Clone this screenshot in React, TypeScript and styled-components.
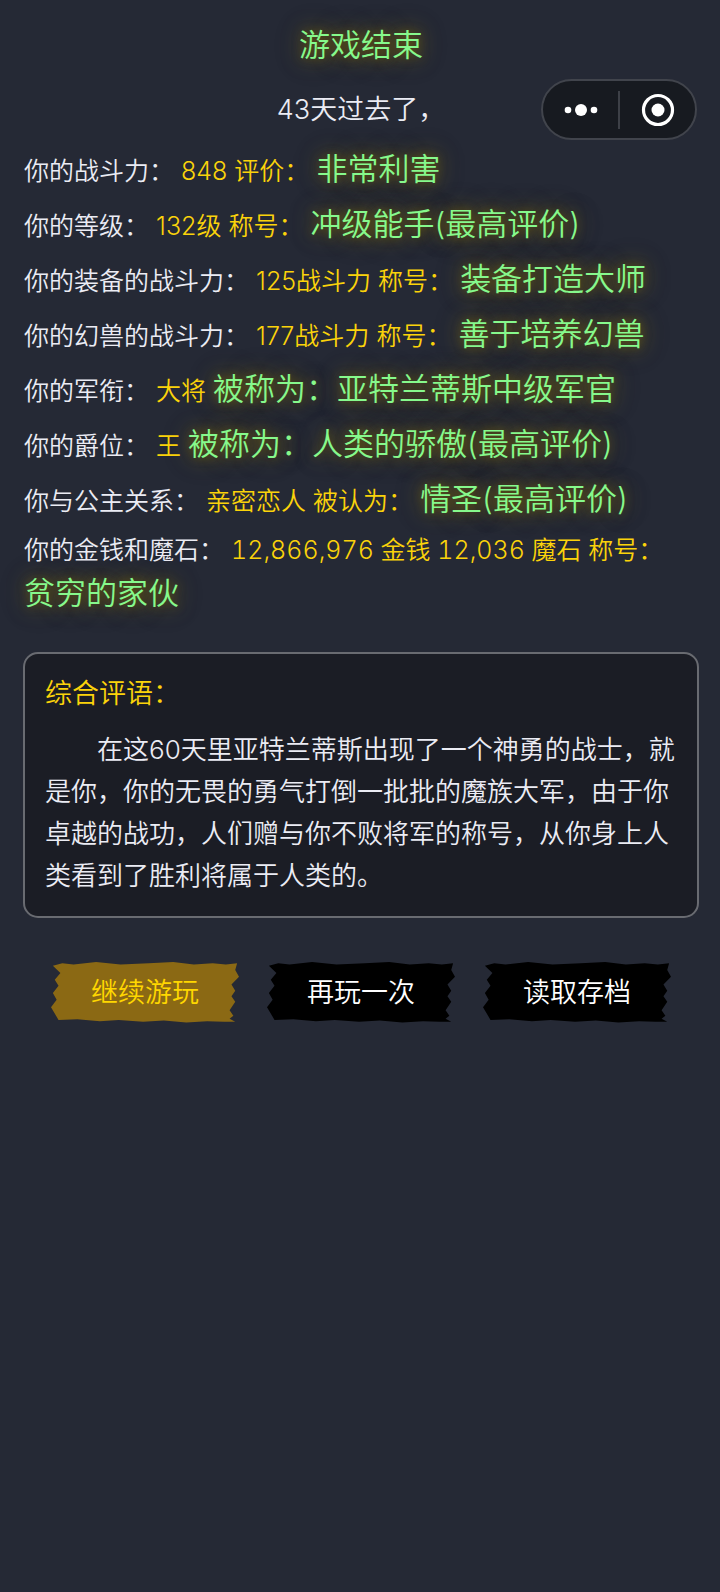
import React from "react";
import styled, { createGlobalStyle, css } from "styled-components";

const GlobalStyle = createGlobalStyle`
  * {
    box-sizing: border-box;
  }
  body {
    margin: 0;
    background: #252935;
    color: #ebecf4;
    font-family: Inter, "Noto Sans CJK SC", sans-serif;
    font-weight: 350;
  }
  button {
    font: inherit;
    border: 0;
    cursor: pointer;
  }
`;

const glow = css`
  color: #86f98c;
  text-shadow: 0 0 10px rgba(140, 115, 0, 0.5), 0 0 20px rgba(140, 115, 0, 0.6),
    0 0 30px rgba(140, 115, 0, 0.4);
`;

const Page = styled.main`
  position: relative;
  min-height: 100vh;
  padding: 22px 21px 40px 23px;
`;

const Title = styled.h1`
  margin: 0;
  font-size: 31px;
  font-weight: inherit;
  line-height: 46px;
  text-align: center;
  ${glow}
`;

const Elapsed = styled.p`
  margin: 22px 0 16px;
  font-size: 27px;
  line-height: 40px;
  text-align: center;
`;

const Capsule = styled.div`
  position: absolute;
  top: 79px;
  right: 23px;
  display: flex;
  align-items: center;
  width: 156px;
  height: 61px;
  border: 2px solid #41444c;
  border-radius: 31px;
  background: #171a20;
`;

const CapsuleButton = styled.button`
  display: flex;
  flex: 1;
  align-items: center;
  justify-content: center;
  height: 100%;
  padding: 0;
  background: transparent;
`;

const CapsuleDivider = styled.span`
  width: 2px;
  height: 38px;
  background: #3d4047;
`;

const Stats = styled.ul`
  display: flex;
  flex-direction: column;
  gap: 9px;
  margin: 0;
  padding: 0 1px;
  list-style: none;
  font-size: 25px;
  line-height: 39px;
`;

const StatValue = styled.span<{ $amount?: boolean }>`
  color: #fbd30a;
  font-variant-numeric: ${(p) => (p.$amount ? "tabular-nums" : "normal")};
`;

const StatRank = styled.strong`
  display: inline-block;
  font-size: 31px;
  font-weight: inherit;
  line-height: 46px;
  ${glow}
`;

const Review = styled.section`
  margin-top: 36px;
  padding: 19px 20px;
  border: 2px solid #696b71;
  border-radius: 15px;
  background: #1b1d25;
`;

const ReviewTitle = styled.h2`
  margin: 0 0 14px;
  color: #fbd30a;
  font-size: 27px;
  font-weight: inherit;
  line-height: 42px;
`;

const ReviewText = styled.p`
  margin: 0;
  font-size: 26px;
  line-height: 42px;
  text-indent: 2em;
`;

const Actions = styled.div`
  display: flex;
  justify-content: center;
  gap: 28px;
  margin-top: 44px;
`;

const ActionButton = styled.button<{ $primary?: boolean }>`
  flex: 0 1 188px;
  height: 61px;
  padding: 0 0 4px;
  color: ${(p) => (p.$primary ? "#ffd700" : "#ffffff")};
  background: ${(p) => (p.$primary ? "#8b6914" : "#000000")};
  font-size: 27px;
  white-space: nowrap;
  clip-path: polygon(
    1% 6%, 6% 2%, 12% 4%, 24% 0%, 37% 4%, 52% 2%, 65% 0%, 76% 4%, 86% 2%, 93% 4%, 99% 2%,
    98% 13%, 100% 24%, 96% 37%, 98% 47%, 96% 56%, 98% 65%, 95% 79%, 97% 88%, 95% 93%, 98% 98%,
    92% 98%, 83% 97%, 72% 99%, 60% 96%, 49% 98%, 36% 95%, 26% 97%, 14% 94%, 4% 95%,
    0% 74%, 3% 62%, 1% 51%, 4% 39%, 2% 29%, 5% 18%
  );
`;

interface Stat {
  label: string;
  value: string;
  rank: string;
  amount?: boolean;
}

const stats: Stat[] = [
  { label: "你的战斗力：", value: "848 评价：", rank: "非常利害" },
  { label: "你的等级：", value: "132级 称号：", rank: "冲级能手(最高评价)" },
  { label: "你的装备的战斗力：", value: "125战斗力 称号：", rank: "装备打造大师" },
  { label: "你的幻兽的战斗力：", value: "177战斗力 称号：", rank: "善于培养幻兽" },
  { label: "你的军衔：", value: "大将", rank: "被称为：亚特兰蒂斯中级军官" },
  { label: "你的爵位：", value: "王", rank: "被称为：人类的骄傲(最高评价)" },
  { label: "你与公主关系：", value: "亲密恋人 被认为：", rank: "情圣(最高评价)" },
  {
    label: "你的金钱和魔石：",
    value: "12,866,976 金钱 12,036 魔石 称号：",
    rank: "贫穷的家伙",
    amount: true,
  },
];

export default function App() {
  return (
    <Page lang="zh-CN">
      <GlobalStyle />
      <Title>游戏结束</Title>
      <Elapsed>43天过去了，</Elapsed>
      <Capsule>
        <CapsuleButton type="button" aria-label="更多">
          <svg width="34" height="14" viewBox="0 0 34 14" fill="#fff" aria-hidden="true">
            <circle cx="4" cy="7" r="3.3" />
            <circle cx="17" cy="7" r="6" />
            <circle cx="30" cy="7" r="3.3" />
          </svg>
        </CapsuleButton>
        <CapsuleDivider />
        <CapsuleButton type="button" aria-label="关闭">
          <svg width="34" height="34" viewBox="0 0 34 34" aria-hidden="true">
            <circle cx="17" cy="17" r="14.5" fill="none" stroke="#fff" strokeWidth="3.2" />
            <circle cx="17" cy="17" r="6.5" fill="#fff" />
          </svg>
        </CapsuleButton>
      </Capsule>
      <Stats>
        {stats.map((s) => (
          <li key={s.label}>
            {s.label} <StatValue $amount={s.amount}>{s.value}</StatValue>{" "}
            <StatRank>{s.rank}</StatRank>
          </li>
        ))}
      </Stats>
      <Review>
        <ReviewTitle>综合评语：</ReviewTitle>
        <ReviewText>
          在这60天里亚特兰蒂斯出现了一个神勇的战士，就是你，你的无畏的勇气打倒一批批的魔族大军，由于你卓越的战功，人们赠与你不败将军的称号，从你身上人类看到了胜利将属于人类的。
        </ReviewText>
      </Review>
      <Actions>
        <ActionButton type="button" $primary>
          继续游玩
        </ActionButton>
        <ActionButton type="button">再玩一次</ActionButton>
        <ActionButton type="button">读取存档</ActionButton>
      </Actions>
    </Page>
  );
}
